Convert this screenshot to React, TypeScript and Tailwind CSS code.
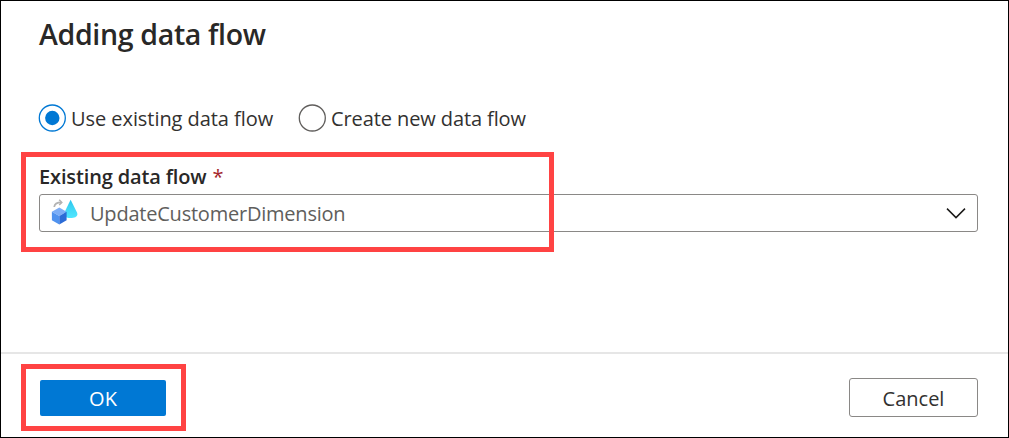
import React from "react";

function DataFlowIcon() {
  return (
    <svg width="28" height="28" viewBox="0 0 28 28" className="shrink-0">
      <defs>
        <linearGradient id="drop" x1="0" y1="0" x2="0" y2="1">
          <stop offset="0" stopColor="#29c3ee" />
          <stop offset="0.35" stopColor="#3cd3f3" />
          <stop offset="1" stopColor="#50e6ff" />
        </linearGradient>
      </defs>
      <path d="M20.6 0.8 L27 13.6 C28.4 17.2 25 19 20.6 19 C16.5 19 13 17.2 14.4 13.6Z" fill="url(#drop)" />
      <path d="M1.9 12.7 9.3 8.5 16.6 12.7 9.3 16.9Z" fill="#7badf7" />
      <path d="M1.9 12.7 9.3 16.9 V25.4 L1.9 21.2Z" fill="#4f92ef" />
      <path d="M16.6 12.7 9.3 16.9 V25.4 L16.6 21.2Z" fill="#2b6bd6" />
      <path d="M4.2 8 C4.5 5 7 3.3 11.4 3.3" fill="none" stroke="#b3b3b3" strokeWidth="1.7" />
      <path d="M9.2 0.8 11.8 3.4 9.2 6" fill="none" stroke="#b3b3b3" strokeWidth="1.5" />
    </svg>
  );
}

function Radio({ checked = false, label, textClass }: { checked?: boolean; label: string; textClass: string }) {
  return (
    <label className="flex items-center">
      <svg width="28" height="28" viewBox="0 0 28 28" className="shrink-0">
        <circle cx="14.3" cy="14" r="13" fill="white" stroke={checked ? "#0078d4" : "#605e5c"} strokeWidth="1.3" />
        {checked && <circle cx="14.3" cy="14" r="7.2" fill="#0078d4" />}
      </svg>
      <span className={`whitespace-nowrap pt-[2px] text-[20px] leading-7 text-[#323130] ${textClass}`}>{label}</span>
    </label>
  );
}

export default function App() {
  return (
    <div className="relative flex h-[438px] w-[1009px] flex-col border border-black bg-white font-['Open_Sans','Noto_Sans',sans-serif]">
      <main className="flex h-[351px] flex-col pl-[37px] pr-[30px]">
        <h1 className="mt-[13px] whitespace-nowrap pl-px text-[28.5px] font-semibold leading-10 tracking-[-0.33px] text-[#292827]">
          Adding data flow
        </h1>
        <div className="mt-[49px] flex">
          <Radio checked label="Use existing data flow" textClass="ml-[5px] w-[227px] tracking-[-0.06px]" />
          <Radio label="Create new data flow" textClass="ml-[5px] tracking-[-0.1px]" />
        </div>
        <div className="mt-[30px] flex whitespace-nowrap pl-px text-[20px] font-semibold leading-7 tracking-[-0.14px] text-[#292827]">
          Existing data flow<span className="ml-[6px] font-normal text-[#a4262c]">*</span>
        </div>
        <div className="ml-px mt-[3px] flex h-[38px] items-center rounded-[3px] border border-[#8a8886] pl-[10px] pr-[11px]">
          <DataFlowIcon />
          <span className="ml-[12px] grow pt-[2px] text-[20px] leading-7 tracking-[-0.22px] text-[#605e5c]">UpdateCustomerDimension</span>
          <svg width="20" height="12" viewBox="0 0 20 12">
            <path d="M1 1.6 10 10.6 19 1.6" fill="none" stroke="#1b1a19" strokeWidth="1.5" />
          </svg>
        </div>
      </main>
      <footer className="flex flex-1 items-start justify-between border-t-2 border-[#e6e6e6] pl-[39px] pr-[30px]">
        <button className="mt-[26px] h-9 w-[126px] rounded-[2px] bg-[#0078d4] pt-px text-[20px] leading-9 text-white">OK</button>
        <button className="mt-[24px] h-[39px] w-[129px] rounded-[3px] border border-[#8a8886] pt-[2px] text-[20px] leading-9 text-[#323130]">Cancel</button>
      </footer>
      <div className="pointer-events-none absolute left-[20px] top-[151px] h-[100px] w-[533px] border-[5px] border-[#ff4343]" />
      <div className="pointer-events-none absolute left-[20px] top-[363px] h-[67px] w-[165px] border-[5px] border-[#ff4343]" />
    </div>
  );
}
